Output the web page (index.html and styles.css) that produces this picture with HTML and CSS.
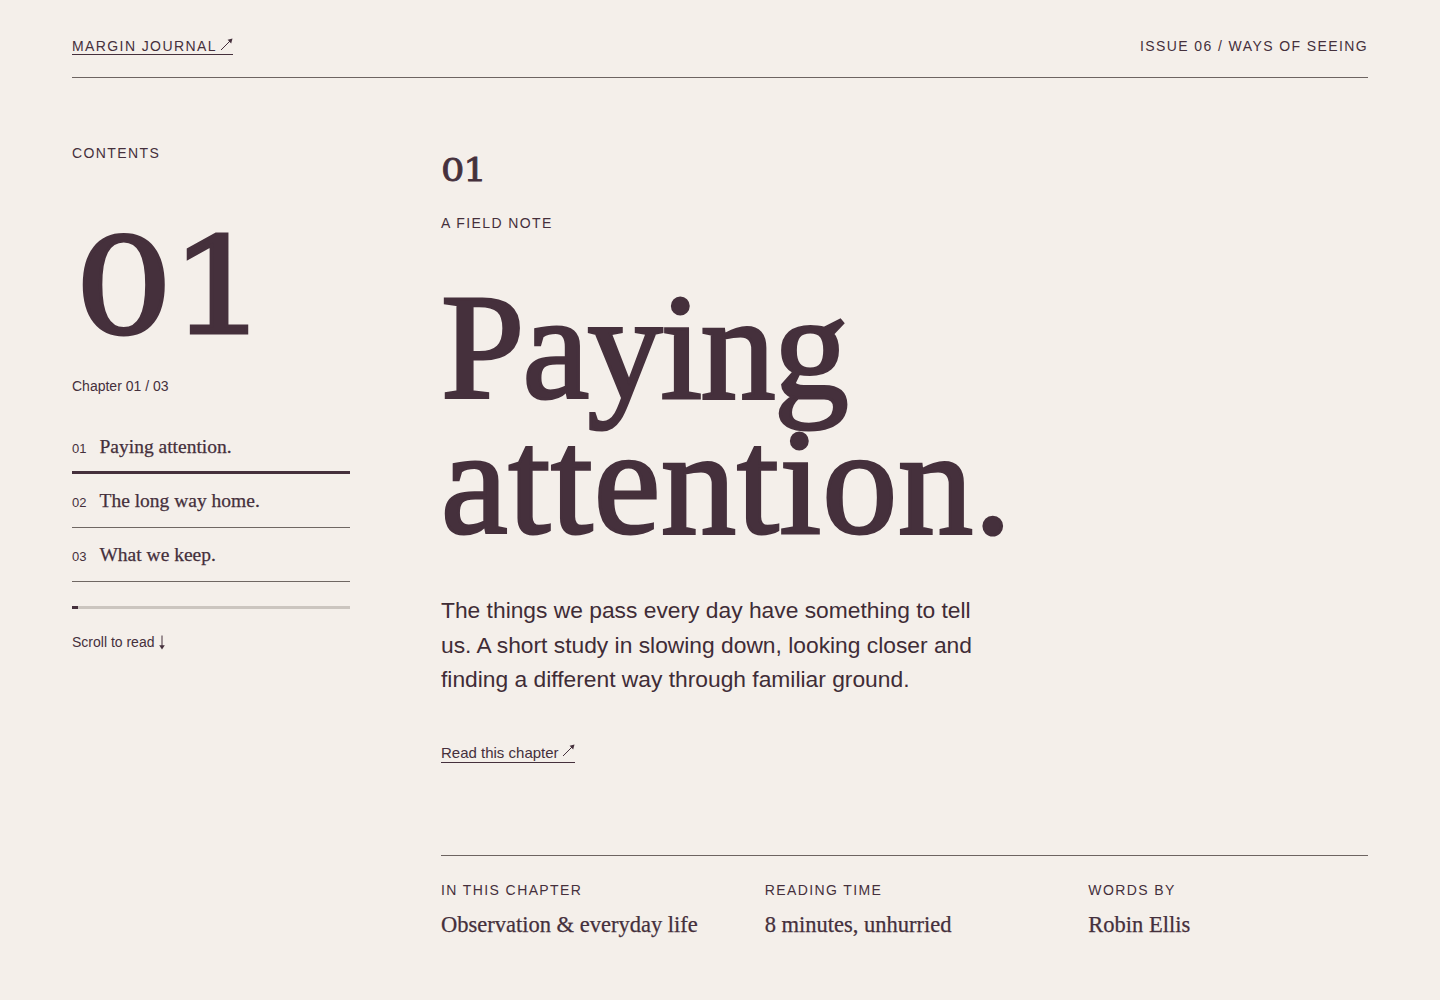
FILE: index.html
```html
<!DOCTYPE html>
<html lang="en">
<head>
<meta charset="utf-8">
<title>Margin Journal — Paying attention.</title>
<link rel="stylesheet" href="styles.css">
</head>
<body>
<div class="page">
  <header class="masthead">
    <a class="brand" href="#">MARGIN JOURNAL <svg class="arrow" viewBox="0 0 13 13" width="13" height="13" aria-hidden="true"><path d="M1 12 L10.5 2.5" fill="none" stroke="currentColor" stroke-width="1"/><path d="M12.5 0.5 L7.6 1.8 L11.2 5.4 Z" fill="currentColor"/></svg></a>
    <div class="issue">ISSUE 06 / WAYS OF SEEING</div>
  </header>

  <div class="layout">
    <aside class="sidebar">
      <div class="eyebrow">CONTENTS</div>
      <div class="big-num">01</div>
      <div class="chapter-count">Chapter 01 / 03</div>
      <ol class="toc">
        <li class="toc-item active"><span class="toc-num">01</span><span class="toc-title">Paying attention.</span></li>
        <li class="toc-item"><span class="toc-num">02</span><span class="toc-title">The long way home.</span></li>
        <li class="toc-item"><span class="toc-num">03</span><span class="toc-title">What we keep.</span></li>
      </ol>
      <div class="progress"><div class="progress-fill"></div></div>
      <div class="scroll-hint">Scroll to read <svg class="down" viewBox="0 0 8 15" width="8" height="15" aria-hidden="true"><path d="M4 0.5 V12.5" fill="none" stroke="currentColor" stroke-width="1"/><path d="M1.2 10.2 L4 14.5 L6.8 10.2 Z" fill="currentColor"/></svg></div>
    </aside>

    <main class="main">
      <div class="small-num">01</div>
      <div class="eyebrow kicker">A FIELD NOTE</div>
      <h1 class="title"><span class="title-line tight">Paying</span><span class="title-line wide">attention.</span></h1>
      <p class="lede">The things we pass every day have something to tell us. A short study in slowing down, looking closer and finding a different way through familiar ground.</p>
      <div class="cta-row"><a class="cta" href="#">Read this chapter <svg class="arrow" viewBox="0 0 13 13" width="13" height="13" aria-hidden="true"><path d="M1 12 L10.5 2.5" fill="none" stroke="currentColor" stroke-width="1"/><path d="M12.5 0.5 L7.6 1.8 L11.2 5.4 Z" fill="currentColor"/></svg></a></div>

      <div class="meta">
        <div class="meta-item">
          <div class="eyebrow meta-label">IN THIS CHAPTER</div>
          <div class="meta-value">Observation &amp; everyday life</div>
        </div>
        <div class="meta-item">
          <div class="eyebrow meta-label">READING TIME</div>
          <div class="meta-value">8 minutes, unhurried</div>
        </div>
        <div class="meta-item">
          <div class="eyebrow meta-label">WORDS BY</div>
          <div class="meta-value">Robin Ellis</div>
        </div>
      </div>
    </main>
  </div>
</div>
</body>
</html>
```

FILE: styles.css
```css
* { box-sizing: border-box; }

html, body {
  margin: 0;
  padding: 0;
  background: #f4efea;
  color: #45303c;
  font-family: "Liberation Sans", Arial, sans-serif;
}

a { color: inherit; text-decoration: none; }

.page {
  padding: 0 72px;
  min-height: 1000px;
}

.masthead {
  display: flex;
  justify-content: space-between;
  align-items: flex-start;
  padding-top: 38px;
  padding-bottom: 22px;
  border-bottom: 1px solid #6d6461;
}

.brand, .issue {
  font-size: 14px;
  line-height: 16px;
  letter-spacing: 0.1em;
}

.brand {
  display: inline-flex;
  align-items: center;
  border-bottom: 1px solid #45303c;
}

.arrow {
  display: inline-block;
  width: 13px;
  height: 13px;
  margin-left: 3px;
  margin-top: -4px;
}

.layout {
  display: grid;
  grid-template-columns: 278px 1fr;
  column-gap: 91px;
  padding-top: 67px;
}

.eyebrow {
  font-size: 14px;
  line-height: 17px;
  letter-spacing: 0.1em;
}

.big-num {
  margin-top: 45px;
  font-family: "DejaVu Serif", "Liberation Serif", serif;
  font-size: 132px;
  line-height: 160px;
  letter-spacing: -0.025em;
  padding-left: 2px;
  transform: scaleX(1.18);
  transform-origin: left center;
  -webkit-text-stroke: 3px currentColor;
}

.chapter-count {
  margin-top: 11px;
  font-size: 14px;
  line-height: 17px;
}

.toc {
  list-style: none;
  margin: 26px 0 0;
  padding: 0;
}

.toc-item {
  display: flex;
  align-items: baseline;
  gap: 13px;
  height: 54px;
  padding-top: 15px;
  border-bottom: 1px solid #6f6763;
}

.toc-item.active {
  height: 53px;
  padding-top: 14px;
  border-bottom: 3px solid #45303c;
}

.toc-num {
  font-size: 13px;
  line-height: 24px;
}

.toc-title {
  font-family: "Liberation Serif", "Times New Roman", serif;
  font-size: 19.5px;
  line-height: 24px;
  -webkit-text-stroke: 0.25px currentColor;
}

.progress {
  margin-top: 24px;
  height: 3px;
  background: #cbc5bf;
}

.progress-fill {
  width: 6px;
  height: 3px;
  background: #45303c;
}

.scroll-hint {
  display: flex;
  align-items: center;
  gap: 4px;
  margin-top: 25px;
  font-size: 14px;
  line-height: 17px;
}

.down {
  display: block;
  width: 8px;
  height: 15px;
}

.main {
  display: flex;
  flex-direction: column;
  align-items: flex-start;
}

.small-num {
  margin-top: 8px;
  font-family: "DejaVu Serif", "Liberation Serif", serif;
  font-size: 32px;
  line-height: 35px;
  letter-spacing: -0.03em;
  transform: scaleX(1.15);
  transform-origin: left center;
  -webkit-text-stroke: 0.8px currentColor;
}

.kicker {
  margin-top: 27px;
}

.title {
  margin: 48px 0 0;
  font-family: "Liberation Serif", "Times New Roman", serif;
  font-weight: 400;
  font-size: 150px;
  line-height: 135px;
  -webkit-text-stroke: 3px currentColor;
}

.title-line {
  display: block;
}

.title-line.tight {
  letter-spacing: -0.012em;
}

.title-line.wide {
  letter-spacing: 0.006em;
}

.lede {
  margin: 43px 0 0;
  max-width: 560px;
  font-size: 22.8px;
  line-height: 34.5px;
  color: #3f2c36;
}

.cta-row {
  margin-top: 47px;
}

.cta {
  display: inline-flex;
  align-items: center;
  font-size: 15px;
  line-height: 18px;
  border-bottom: 1px solid #45303c;
}

.meta {
  align-self: stretch;
  margin-top: 92px;
  padding-top: 26px;
  border-top: 1px solid #6d6461;
  display: grid;
  grid-template-columns: repeat(3, 1fr);
  column-gap: 44px;
}

.meta-label {
  font-size: 14px;
}

.meta-value {
  margin-top: 12px;
  font-family: "Liberation Serif", "Times New Roman", serif;
  font-size: 22.5px;
  line-height: 28px;
  -webkit-text-stroke: 0.25px currentColor;
}
```
